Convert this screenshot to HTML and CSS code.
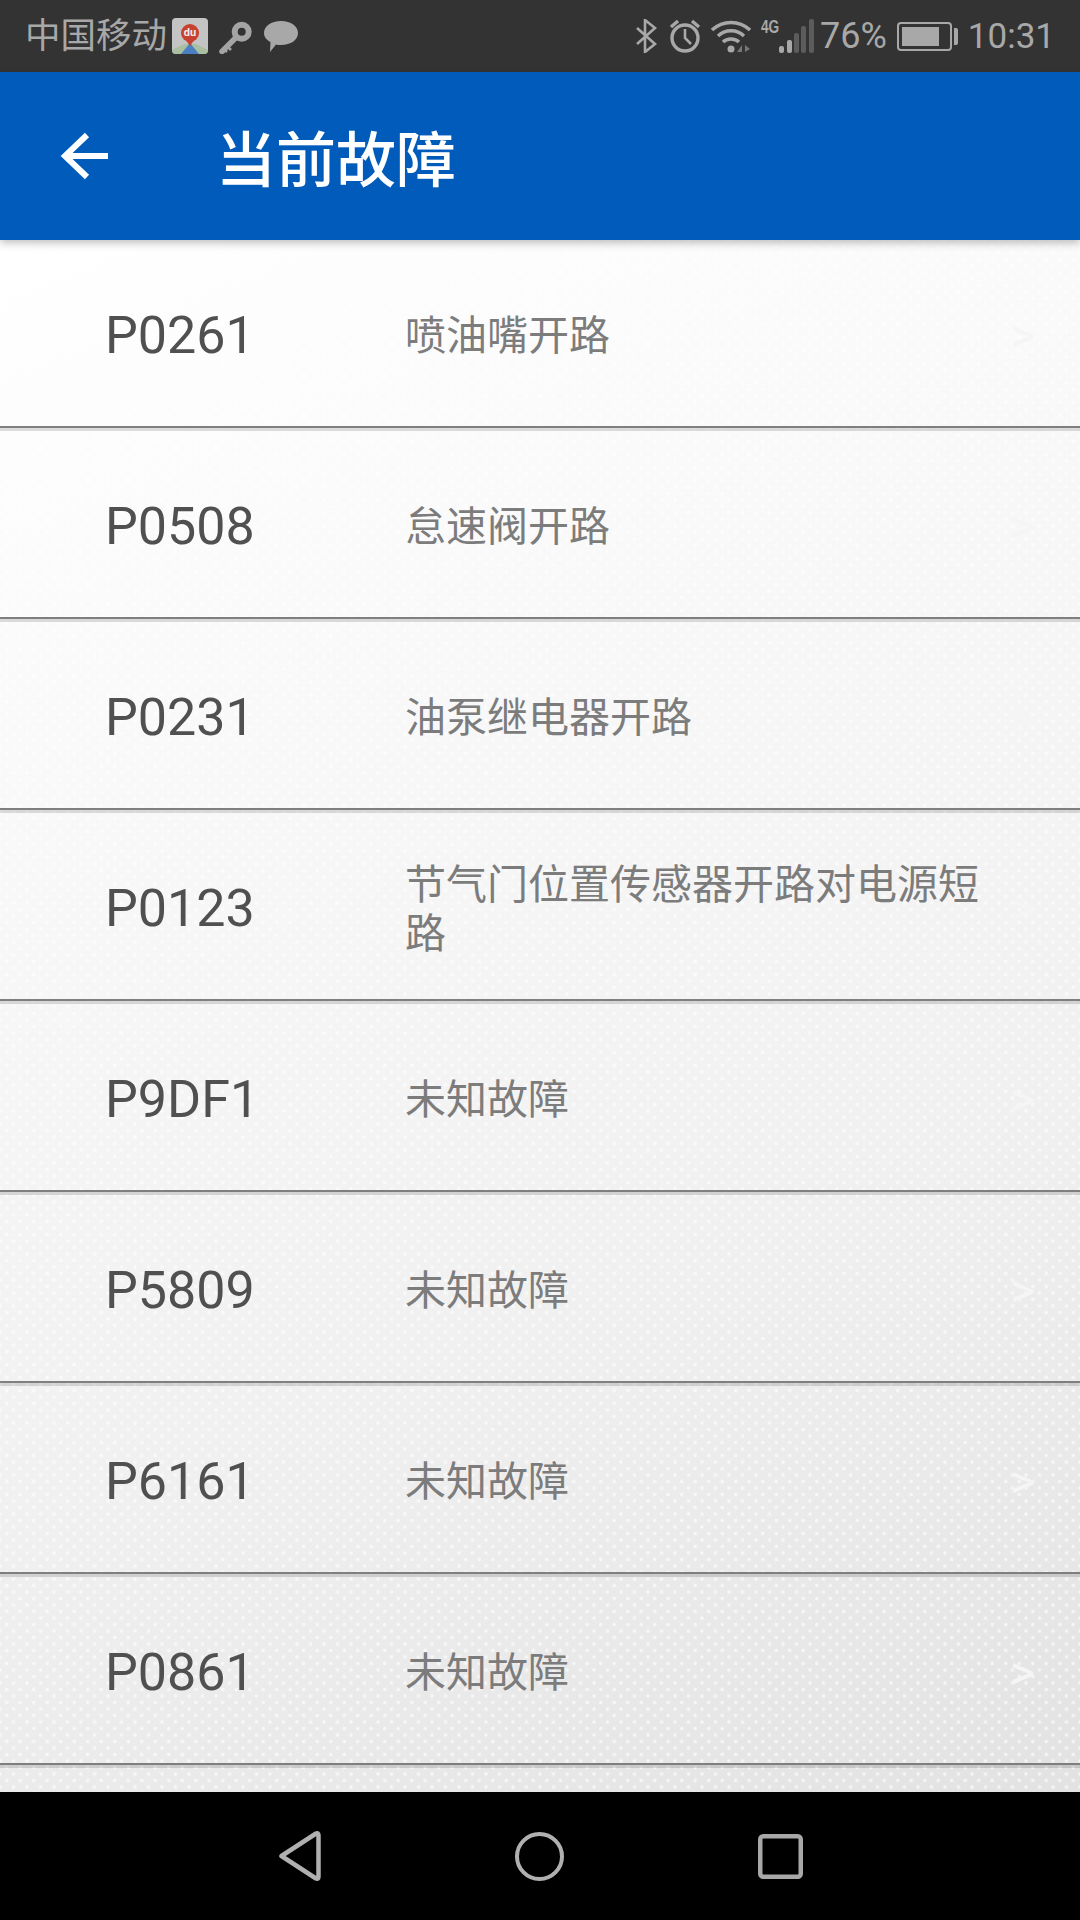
FILE: index.html
```html
<!DOCTYPE html>
<html lang="zh">

<head>
    <meta charset="UTF-8">
    <title>当前故障</title>
    <link rel="stylesheet" href="styles.css">
</head>

<body>
    <div class="phone">
        <div class="status">
            <div class="status_left">
                <span class="carrier">中国移动</span>
                <svg class="ic_map" width="36" height="36" viewBox="0 0 36 36">
                    <rect width="36" height="36" rx="4" fill="#c4c4c4" />
                    <path d="M0 32 L12 26 H24 L36 32 a4 4 0 0 1 -4 4 H4 a4 4 0 0 1 -4 -4Z" fill="#a9bfa0" />
                    <path d="M18 25 L27 36 H9Z" fill="#4a7fc4" />
                    <circle cx="18" cy="15" r="9" fill="#c8402f" />
                    <path d="M13 21 L18 28 L23 21Z" fill="#c8402f" />
                    <text class="ic_map_txt" x="18" y="18" text-anchor="middle">du</text>
                </svg>
                <svg class="ic_key" width="34" height="36" viewBox="0 0 34 36">
                    <circle cx="22.700" cy="13.700" r="7" fill="none" stroke="#a4a4a4" stroke-width="6" />
                    <path d="M16.500 20 L3 33.500" fill="none" stroke="#a4a4a4" stroke-width="5.500" stroke-linecap="round" />
                    <path d="M9 29 L12 32 M5 31 L8 34" fill="none" stroke="#a4a4a4" stroke-width="2.500" />
                </svg>
                <svg class="ic_msg" width="34" height="32" viewBox="0 0 34 32">
                    <path d="M17 1 C27 1 34 6 34 13 C34 20 27 25 17 25 C15 25 13 25 12 24.500 L6 32 L6.500 22 C2.500 20 0 17 0 13 C0 6 7 1 17 1Z" fill="#a8a8a8" />
                </svg>
            </div>
            <div class="status_right">
                <svg class="ic_bt" width="22" height="34" viewBox="0 0 22 34">
                    <path d="M2 9 L20 25 L10 33 V1 L20 9 L2 25" fill="none" stroke="#a8a8a8" stroke-width="2.600" />
                </svg>
                <svg class="ic_alarm" width="32" height="34" viewBox="0 0 32 34">
                    <circle cx="16" cy="19" r="13" fill="none" stroke="#a8a8a8" stroke-width="3.400" />
                    <path d="M16 10 V19 L22 25" fill="none" stroke="#a8a8a8" stroke-width="2.600" />
                    <path d="M2 8 L9 2 M30 8 L23 2" stroke="#a8a8a8" stroke-width="3.400" />
                </svg>
                <svg class="ic_wifi" width="40" height="34" viewBox="0 0 40 34">
                    <path d="M1 11 C12 1 28 1 39 11 M7 17 C14 10 26 10 33 17 M12 23 C16 19 24 19 28 23" fill="none" stroke="#a8a8a8" stroke-width="3.400" />
                    <circle cx="20" cy="30" r="3.500" fill="#a8a8a8" />
                    <path d="M26 33 L31 26 V33Z M34 26 L39 30 L34 33Z" fill="#777" />
                </svg>
                <div class="net">
                    <span class="net_txt">4G</span>
                    <svg width="35" height="34" viewBox="0 0 35 34">
                        <rect x="0" y="27" width="5" height="7" rx="2" fill="#a8a8a8" />
                        <rect x="8" y="21" width="5" height="13" rx="2" fill="#a8a8a8" />
                        <rect x="15" y="14" width="5" height="20" rx="2" fill="#5c5c5c" />
                        <rect x="22" y="7" width="5" height="27" rx="2" fill="#5c5c5c" />
                        <rect x="30" y="0" width="5" height="34" rx="2" fill="#5c5c5c" />
                    </svg>
                </div>
                <span class="pct">76%</span>
                <div class="batt">
                    <div class="batt_body">
                        <div class="batt_fill"></div>
                    </div>
                    <div class="batt_tip"></div>
                </div>
                <span class="time">10:31</span>
            </div>
        </div>

        <div class="bar">
            <svg class="back" width="50" height="50" viewBox="0 0 50 50">
                <path d="M49 25 H8 M28 4 L6 25 L28 46" fill="none" stroke="#fff" stroke-width="6" />
            </svg>
            <span class="title">当前故障</span>
        </div>

        <div class="list">
            <div class="item">
                <span class="code">P0261</span>
                <span class="desc">喷油嘴开路</span>
                <span class="chev">&gt;</span>
            </div>
            <div class="item">
                <span class="code">P0508</span>
                <span class="desc">怠速阀开路</span>
                <span class="chev">&gt;</span>
            </div>
            <div class="item">
                <span class="code">P0231</span>
                <span class="desc">油泵继电器开路</span>
                <span class="chev">&gt;</span>
            </div>
            <div class="item">
                <span class="code">P0123</span>
                <span class="desc">节气门位置传感器开路对电源短路</span>
                <span class="chev">&gt;</span>
            </div>
            <div class="item">
                <span class="code">P9DF1</span>
                <span class="desc">未知故障</span>
                <span class="chev">&gt;</span>
            </div>
            <div class="item">
                <span class="code">P5809</span>
                <span class="desc">未知故障</span>
                <span class="chev">&gt;</span>
            </div>
            <div class="item">
                <span class="code">P6161</span>
                <span class="desc">未知故障</span>
                <span class="chev">&gt;</span>
            </div>
            <div class="item">
                <span class="code">P0861</span>
                <span class="desc">未知故障</span>
                <span class="chev">&gt;</span>
            </div>
        </div>

        <div class="nav">
            <svg width="42" height="50" viewBox="0 0 42 50">
                <path d="M2.500 25 L37 2.500 Q39.500 1.500 39.500 4.500 V45.500 Q39.500 48.500 37 47.500Z" fill="none" stroke="#b0b0b0" stroke-width="4.500" stroke-linejoin="round" />
            </svg>
            <svg width="49" height="49" viewBox="0 0 49 49">
                <circle cx="24.500" cy="24.500" r="22.500" fill="none" stroke="#b0b0b0" stroke-width="4" />
            </svg>
            <svg width="45" height="45" viewBox="0 0 45 45">
                <rect x="2.250" y="2.250" width="40.500" height="40.500" rx="3" fill="none" stroke="#a8a8a8" stroke-width="4.500" />
            </svg>
        </div>
    </div>
</body>

</html>
```

FILE: styles.css
```css
* {
    margin: 0;
    padding: 0;
    box-sizing: border-box;
}

body {
    width: 1080px;
    height: 1920px;
    overflow: hidden;
    font-family: Roboto, "Noto Sans CJK SC", sans-serif;
}

.phone {
    width: 1080px;
    height: 1920px;
    display: flex;
    flex-direction: column;
}

/* status bar */
.status {
    height: 72px;
    padding: 0 25px;
    background: #333333;
    color: #a8a8a8;
    display: flex;
    justify-content: space-between;
    align-items: center;
}

.status_left,
.status_right {
    display: flex;
    align-items: center;
}

.carrier {
    font-size: 35.500px;
    line-height: 40px;
}

.ic_map {
    margin-left: 5px;
}

.ic_map_txt {
    font: bold 11px Roboto, sans-serif;
    fill: #eee;
}

.ic_key {
    margin-left: 11px;
}

.ic_msg {
    margin-left: 11px;
}

.ic_alarm {
    margin-left: 12px;
}

.ic_wifi {
    margin-left: 10px;
}

.net {
    margin-left: 10px;
    padding-left: 18px;
    display: flex;
    position: relative;
}

.net_txt {
    position: absolute;
    left: 0;
    top: -1px;
    font: bold 19px/18px "Liberation Sans", sans-serif;
    transform: scaleX(.72);
    transform-origin: left center;
}

.pct {
    margin-left: 6px;
    font-size: 36px;
}

.batt {
    margin-left: 10px;
    display: flex;
    align-items: center;
}

.batt_body {
    width: 55px;
    height: 29px;
    padding: 3px;
    border: 2px solid #a8a8a8;
    border-radius: 4px;
}

.batt_fill {
    width: 37px;
    height: 100%;
    background: #a8a8a8;
}

.batt_tip {
    width: 4px;
    height: 17px;
    margin-left: 2px;
    background: #a8a8a8;
    border-radius: 0 2px 2px 0;
}

.time {
    margin-left: 10px;
    font-size: 35px;
}

/* title bar */
.bar {
    height: 168px;
    padding-left: 59px;
    background: #005bbb;
    display: flex;
    align-items: center;
    position: relative;
    z-index: 2;
    box-shadow: 0 3px 8px rgba(0, 0, 0, .25);
}

.back {
    flex: none;
}

.title {
    margin-left: 107px;
    padding-bottom: 2px;
    font-size: 60px;
    font-weight: 500;
    color: #fff;
}

/* list */
.list {
    flex: 1;
    overflow: hidden;
    background-color: #f0f0f0;
    background-image:
        radial-gradient(circle, rgba(255, 255, 255, .6) 1.2px, transparent 2.4px),
        radial-gradient(circle, rgba(255, 255, 255, .6) 1.2px, transparent 2.4px),
        linear-gradient(157deg, #fff 0%, #fafafa 24%, #f0f0f0 65%, #e2e2e2 100%);
    background-size: 13.500px 13px, 13.500px 13px, 100% 100%;
    background-position: 0 0, 6.750px 6.500px, 0 0;
}

.item {
    height: 188px;
    margin-bottom: 3px;
    padding-left: 105px;
    padding-top: 5px;
    border-bottom: 2px solid #7f7f7f;
    box-shadow: 0 3px 0 rgba(0, 0, 0, .13);
    display: flex;
    align-items: center;
}

.code {
    width: 300px;
    font-size: 52px;
    color: #505050;
}

.desc {
    width: 590px;
    padding-top: 2px;
    font-size: 41px;
    line-height: 49px;
    color: #7c7c7c;
}

.chev {
    margin-left: 15px;
    font-size: 48px;
    color: #f5f5f5;
}

/* nav bar */
.nav {
    height: 128px;
    padding-left: 279px;
    background: #000;
    display: flex;
    align-items: center;
    column-gap: 194px;
}
```
